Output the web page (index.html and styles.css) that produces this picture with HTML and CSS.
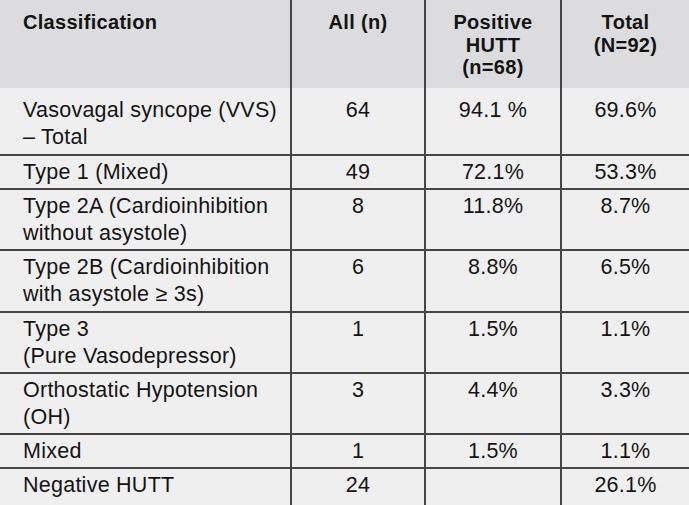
FILE: index.html
```html
<!DOCTYPE html>
<html>
<head>
<meta charset="utf-8">
<link rel="stylesheet" href="styles.css">
</head>
<body>
<table class="tbl">
  <colgroup>
    <col class="c1"><col class="c2"><col class="c3"><col class="c4">
  </colgroup>
  <thead>
    <tr class="head">
      <th class="lbl">Classification</th>
      <th>All (n)</th>
      <th>Positive<br>HUTT<br>(n=68)</th>
      <th>Total<br>(N=92)</th>
    </tr>
  </thead>
  <tbody>
    <tr class="r first"><td class="lbl">Vasovagal syncope (VVS)<br>– Total</td><td>64</td><td>94.1 %</td><td>69.6%</td></tr>
    <tr class="r one"><td class="lbl">Type 1 (Mixed)</td><td>49</td><td>72.1%</td><td>53.3%</td></tr>
    <tr class="r two"><td class="lbl">Type 2A (Cardioinhibition<br>without asystole)</td><td>8</td><td>11.8%</td><td>8.7%</td></tr>
    <tr class="r two b"><td class="lbl">Type 2B (Cardioinhibition<br>with asystole ≥ 3s)</td><td>6</td><td>8.8%</td><td>6.5%</td></tr>
    <tr class="r two"><td class="lbl">Type 3<br>(Pure Vasodepressor)</td><td>1</td><td>1.5%</td><td>1.1%</td></tr>
    <tr class="r two"><td class="lbl">Orthostatic Hypotension<br>(OH)</td><td>3</td><td>4.4%</td><td>3.3%</td></tr>
    <tr class="r one"><td class="lbl">Mixed</td><td>1</td><td>1.5%</td><td>1.1%</td></tr>
    <tr class="r last"><td class="lbl">Negative HUTT</td><td>24</td><td></td><td>26.1%</td></tr>
  </tbody>
</table>
</body>
</html>
```

FILE: styles.css
```css
html, body {
  margin: 0;
  padding: 0;
  background: #efefef;
  overflow: hidden;
}

.tbl {
  width: 689px;
  border-collapse: collapse;
  table-layout: fixed;
  font-family: "Liberation Sans", Arial, sans-serif;
  color: #141414;
}

.c1 { width: 291px; }
.c2 { width: 134px; }
.c3 { width: 136px; }
.c4 { width: 128px; }

.tbl th,
.tbl td {
  padding: 0;
  vertical-align: top;
  text-align: center;
  border-left: 2px solid #454545;
}

.tbl th:first-child,
.tbl td:first-child {
  border-left: none;
}

.tbl .lbl {
  text-align: left;
  padding-left: 23px;
}

.head {
  height: 88px;
  background: #dcdcde;
}

.head th {
  font-size: 20px;
  line-height: 22.5px;
  letter-spacing: 0.3px;
  font-weight: bold;
  padding-top: 11px;
}

.r {
  background: #efefef;
}

.r td {
  font-size: 21.5px;
  line-height: 27px;
  letter-spacing: 0.25px;
  border-top: 2px solid #454545;
  padding-top: 3px;
}

.r.first td {
  border-top: none;
  padding-top: 9px;
}

.first { height: 67px; }
.one { height: 34px; }
.two { height: 61px; }
.two.b { height: 62px; }
.last { height: 40px; }
```
